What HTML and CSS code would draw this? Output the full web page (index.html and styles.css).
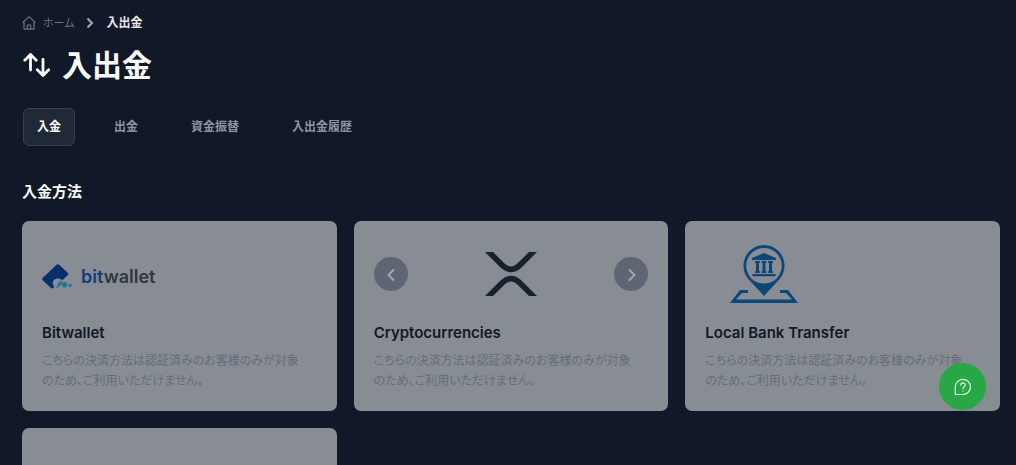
FILE: index.html
```html
<!DOCTYPE html>
<html lang="ja">
<head>
<meta charset="utf-8">
<meta name="viewport" content="width=device-width, initial-scale=1">
<title>入出金</title>
<link rel="stylesheet" href="styles.css">
</head>
<body>
<main class="page">
  <nav class="breadcrumb" aria-label="breadcrumb">
    <a class="breadcrumb-home" href="#">
      <svg class="home-icon" viewBox="0 0 14 14" fill="none" stroke="currentColor" stroke-width="1.2" stroke-linejoin="round" aria-hidden="true"><path d="M.7 6.6 6 1.3q1-.9 2 0l5.300 5.300M2 5.600v7.600h10V5.600M5.300 13V9.200h3.400V13"/></svg>
      <span>ホーム</span>
    </a>
    <svg class="breadcrumb-arrow" viewBox="0 0 8 12" fill="none" stroke="currentColor" stroke-width="2" aria-hidden="true"><path d="m1.500 1.500 4.500 4.500-4.500 4.500"/></svg>
    <span class="breadcrumb-current" aria-current="page">入出金</span>
  </nav>

  <header class="heading">
    <svg class="heading-icon" viewBox="0 0 28 26" fill="none" stroke="currentColor" stroke-width="2.800" stroke-linecap="round" stroke-linejoin="round" aria-hidden="true"><path d="M8.500 18V2.500M2.800 8.200l5.700-5.700 5.700 5.700M21 7.500v16M15.300 17.800l5.700 5.700 5.700-5.700"/></svg>
    <h1 class="heading-text">入出金</h1>
  </header>

  <div class="tabs" role="tablist">
    <button class="tab tab-active" role="tab" aria-selected="true">入金</button>
    <button class="tab" role="tab" aria-selected="false">出金</button>
    <button class="tab" role="tab" aria-selected="false">資金振替</button>
    <button class="tab" role="tab" aria-selected="false">入出金履歴</button>
  </div>

  <h2 class="section-title">入金方法</h2>

  <section class="cards">
    <article class="card">
      <div class="media">
        <div class="bitwallet">
          <svg class="bitwallet-mark" viewBox="0 0 30 26" aria-hidden="true"><path fill="#082f6c" d="M14.500.8q1.500-1 2.900.2l8.300 7.700q1.300 1.200 0 2.500l-5.500 5c-2-2.200-5.600-2.300-7.700-.6-2.500 2-2.100 5-.2 7.100l-1 1.300q-1.300 1-2.600-.2L.9 16.500q-1.500-1.200 0-2.700z"/><path fill="#1e7596" d="M20.200 16.400c-.3 4-2.700 7.300-6.600 7.400 1.700-1.500 2-2.700 2.600-4.200.8-1.900 2.200-3 4-3.200z"/><circle cx="22.500" cy="20.700" r="2.800" fill="#1e7596"/><circle cx="28" cy="21.500" r="1.700" fill="#1e7596"/></svg>
          <span class="bitwallet-name"><span class="bitwallet-bit">bit</span>wallet</span>
        </div>
      </div>
      <h3 class="card-title">Bitwallet</h3>
      <p class="card-text">こちらの決済方法は認証済みのお客様のみが対象<br>のため、ご利用いただけません。</p>
    </article>

    <article class="card">
      <div class="media media-carousel">
        <button class="arrow" aria-label="前へ"><svg class="arrow-icon" viewBox="0 0 14 14" fill="none" stroke="currentColor" stroke-width="2" stroke-linecap="round" aria-hidden="true"><path d="M9.500 3 4.500 8l5 5"/></svg></button>
        <svg class="xrp" viewBox="0 0 52 44" fill="#1b212c" aria-hidden="true"><path d="M0 0h8l11.600 11.500q6.400 6 12.800 0L44 0h8L36 16q-10 8.600-20 0zM0 44h8l11.600-11.500q6.400-6 12.800 0L44 44h8L36 28q-10-8.600-20 0z"/></svg>
        <button class="arrow" aria-label="次へ"><svg class="arrow-icon" viewBox="0 0 14 14" fill="none" stroke="currentColor" stroke-width="2" stroke-linecap="round" aria-hidden="true"><path d="m5.500 3 5 5-5 5"/></svg></button>
      </div>
      <h3 class="card-title">Cryptocurrencies</h3>
      <p class="card-text">こちらの決済方法は認証済みのお客様のみが対象<br>のため、ご利用いただけません。</p>
    </article>

    <article class="card">
      <div class="media">
        <svg class="bank" viewBox="0 0 68 58" fill="#0c4877" aria-hidden="true"><path fill-rule="evenodd" d="M34 0a20.500 20.500 0 0 1 20.500 20.500c0 9-4.500 13.500-9 18L34 51 22.500 38.500c-4.500-4.500-9-9-9-18A20.500 20.500 0 0 1 34 0zm0 3a17.800 17.800 0 1 0 0 35.600A17.800 17.800 0 0 0 34 3z"/><path d="m34 8 12 5v2H22v-2zM25 16h5v1.500l-1 .5v8l1 .5V28h-5v-1.500l1-.5v-8l-1-.5zM31.500 16h5v1.500l-1 .5v8l1 .5V28h-5v-1.500l1-.5v-8l-1-.5zM38 16h5v1.500l-1 .5v8l1 .5V28h-5v-1.500l1-.5v-8l-1-.5zM22.500 29h23v2.300h-23z"/><path fill-rule="evenodd" d="M10 45h8v3h-6l-6 6.500h56L56 48h-6v-3h8l10 13H0z"/></svg>
      </div>
      <h3 class="card-title">Local Bank Transfer</h3>
      <p class="card-text">こちらの決済方法は認証済みのお客様のみが対象<br>のため、ご利用いただけません。</p>
    </article>

    <article class="card card-empty"></article>
  </section>
</main>

<button class="help" aria-label="ヘルプ">
  <svg class="help-icon" viewBox="0 0 18 18" fill="none" stroke="currentColor" stroke-width="1.200" stroke-linecap="round" stroke-linejoin="round" aria-hidden="true"><path d="M1.300 16.500V9a7.600 7.600 0 1 1 7.600 7.500zM6.800 7.200c0-3 4.400-3 4.400-.2 0 1.800-2.200 1.700-2.200 3.500M9 12.700v.3"/></svg>
</button>
</body>
</html>
```
FILE: styles.css
```css
* {
  box-sizing: border-box;
}

body {
  margin: 0;
  background: #111827;
  color: #fff;
  font-family: Inter, "Noto Sans CJK JP", sans-serif;
  font-size: 12px;
}

h1, h2, h3, p {
  margin: 0;
}

button {
  padding: 0;
  border: 0;
  font: inherit;
  cursor: pointer;
}

svg {
  display: block;
  flex: none;
}

.page {
  padding: 13px 16px 16px 22px;
}

.breadcrumb {
  display: flex;
  align-items: center;
  gap: 12px;
  line-height: 20px;
}

.breadcrumb-home {
  display: flex;
  align-items: center;
  gap: 7px;
  color: #6b7280;
  font-size: 11px;
  text-decoration: none;
  font-feature-settings: "palt";
}

.home-icon {
  width: 14px;
  height: 14px;
}

.breadcrumb-arrow {
  width: 8px;
  height: 12px;
  color: #a5abb6;
}

.breadcrumb-current {
  color: #e5e7eb;
  font-weight: 700;
}

.heading {
  display: flex;
  align-items: center;
  gap: 12px;
  margin-top: 10px;
}

.heading-icon {
  width: 28px;
  height: 26px;
}

.heading-text {
  font-size: 30px;
  line-height: 44px;
  font-weight: 700;
}

.tabs {
  display: flex;
  gap: 25px;
  margin: 21px 0 34px 1px;
}

.tab {
  padding: 0 13px;
  border: 1px solid transparent;
  border-radius: 6px;
  background: transparent;
  color: #8d95a2;
  font-weight: 700;
  line-height: 36px;
}

.tab-active {
  background: #1f2937;
  border-color: #374151;
  color: #fff;
}

.section-title {
  font-size: 15px;
  line-height: 24px;
  font-weight: 700;
}

.cards {
  display: grid;
  grid-template-columns: repeat(3, 1fr);
  gap: 17px;
  margin-top: 17px;
}

.card {
  padding: 21px 20px 20px;
  border-radius: 7px;
  background: #888c93;
}

.card-empty {
  min-height: 190px;
}

.media {
  display: flex;
  align-items: center;
  height: 64px;
}

.media-carousel {
  justify-content: space-between;
}

.bitwallet {
  display: flex;
  align-items: center;
  gap: 9px;
  padding-top: 6px;
}

.bitwallet-mark {
  width: 30px;
  height: 26px;
}

.bitwallet-name {
  color: #31363e;
  font-size: 18px;
  line-height: 24px;
  font-weight: 600;
}

.bitwallet-bit {
  color: #143b7c;
}

.arrow {
  display: flex;
  align-items: center;
  justify-content: center;
  width: 34px;
  height: 34px;
  border-radius: 50%;
  background: #5e6673;
  color: #a3a7ad;
}

.arrow-icon {
  width: 14px;
  height: 14px;
}

.xrp {
  width: 52px;
  height: 44px;
}

.bank {
  width: 68px;
  height: 58px;
  margin-left: 25px;
}

.card-title {
  margin-top: 17px;
  color: #111827;
  font-size: 15px;
  line-height: 20px;
  font-weight: 600;
}

.card-text {
  margin-top: 8px;
  color: #666c78;
  line-height: 20px;
  font-feature-settings: "palt";
}

.help {
  position: fixed;
  right: 30px;
  bottom: 55px;
  display: flex;
  align-items: center;
  justify-content: center;
  width: 47px;
  height: 47px;
  border-radius: 50%;
  background: #28a745;
  color: #d9f5df;
}

.help-icon {
  width: 18px;
  height: 18px;
}
```
